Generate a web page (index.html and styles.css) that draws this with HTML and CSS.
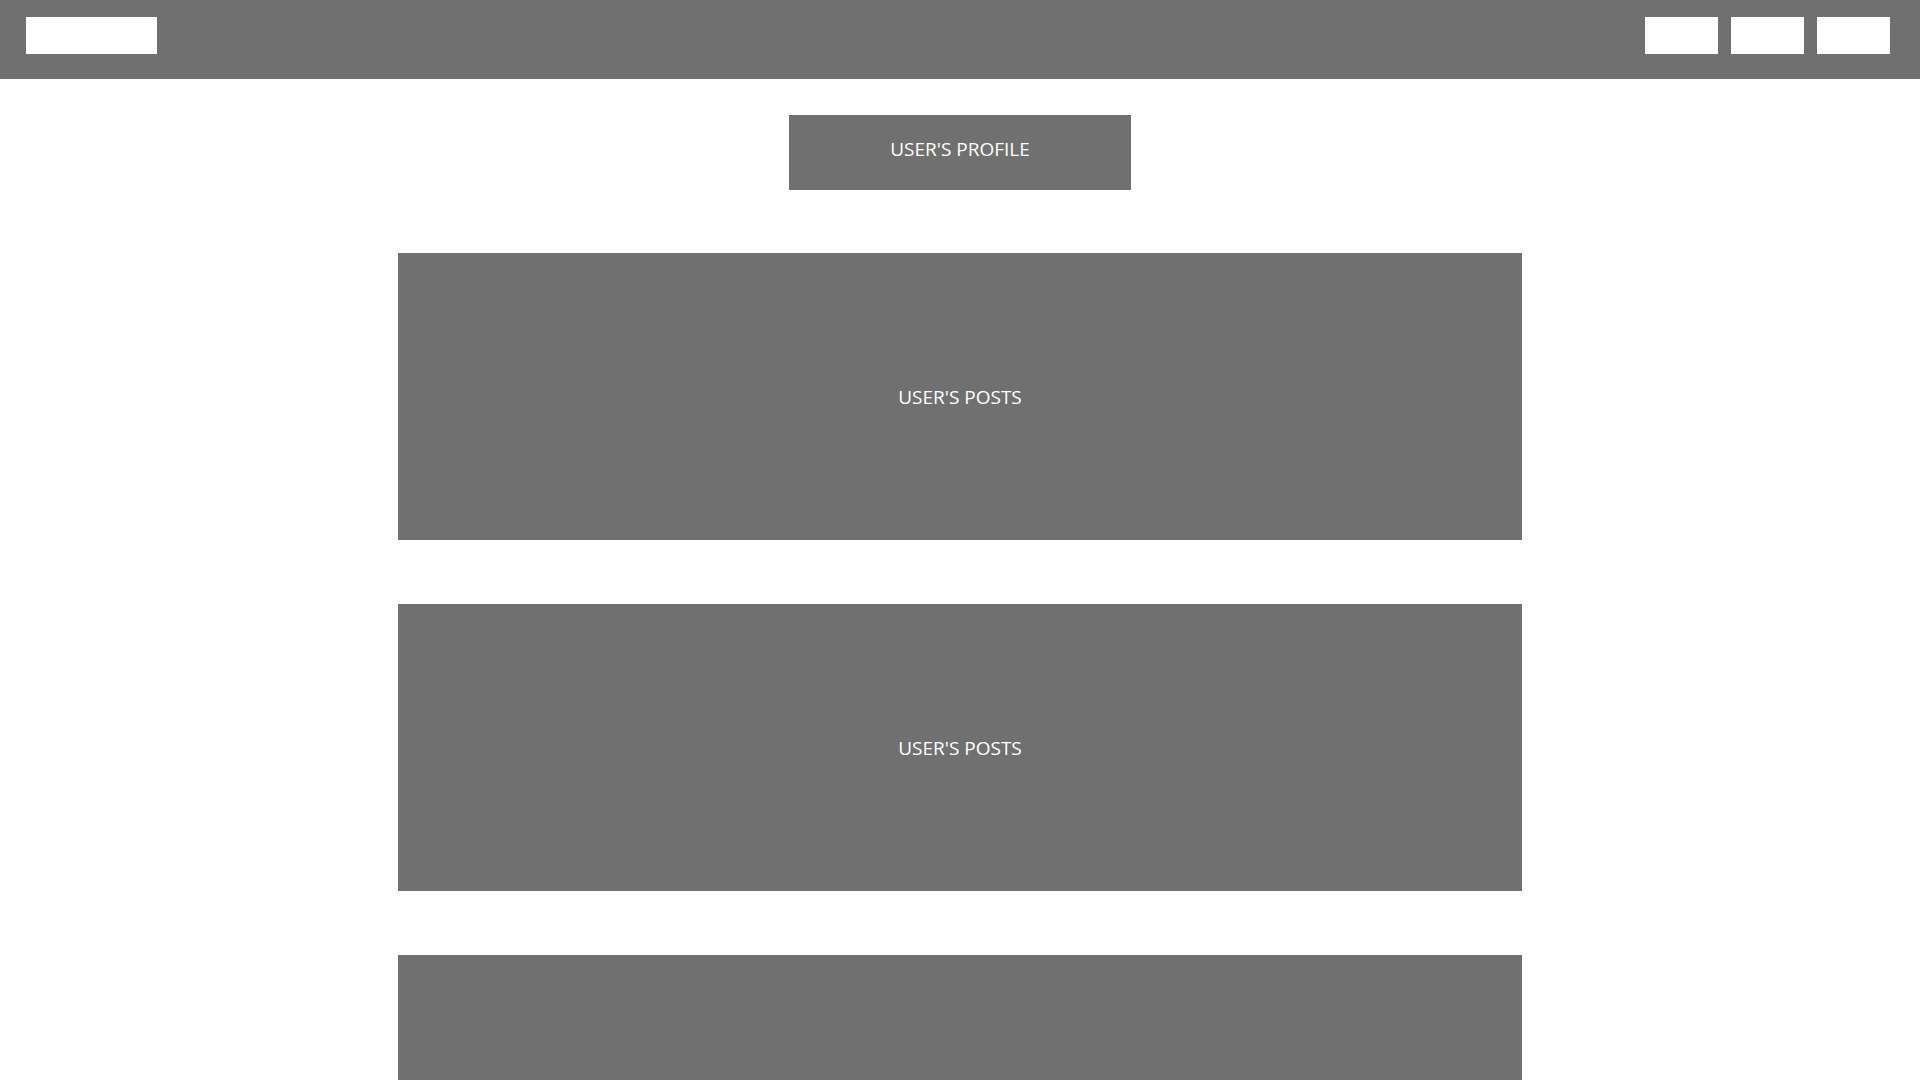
FILE: index.html
```html
<!DOCTYPE html>
<html lang="en">
<head>
<meta charset="utf-8">
<title>User Profile</title>
<link rel="stylesheet" href="styles.css">
</head>
<body>
<header class="topbar">
  <div class="logo"></div>
  <nav class="nav">
    <div class="nav-item"></div>
    <div class="nav-item"></div>
    <div class="nav-item"></div>
  </nav>
</header>
<main class="content">
  <div class="profile">USER'S PROFILE</div>
  <section class="posts">
    <div class="post">USER'S POSTS</div>
    <div class="post">USER'S POSTS</div>
    <div class="post"></div>
  </section>
</main>
</body>
</html>
```
FILE: styles.css
```css
* { box-sizing: border-box; }
html, body { margin: 0; padding: 0; }
body {
  background: #ffffff;
  font-family: "Open Sans", "Noto Sans", sans-serif;
  color: #ffffff;
  overflow: hidden;
  height: 1080px;
}
.topbar {
  height: 79px;
  background: #707070;
  display: flex;
  align-items: flex-start;
  justify-content: space-between;
  padding: 17px 30px 0 26px;
}
.logo {
  width: 131px;
  height: 37px;
  background: #ffffff;
}
.nav {
  display: flex;
  gap: 13px;
}
.nav-item {
  width: 73px;
  height: 37px;
  background: #ffffff;
}
.content {
  display: flex;
  flex-direction: column;
  align-items: center;
  padding-top: 36px;
}
.profile {
  width: 342px;
  height: 75px;
  background: #707070;
  font-size: 19px;
  display: flex;
  justify-content: center;
  padding-top: 22px;
  line-height: 24px;
}
.posts {
  margin-top: 63px;
  display: flex;
  flex-direction: column;
  gap: 64px;
}
.post {
  width: 1124px;
  height: 287px;
  background: #707070;
  display: flex;
  align-items: center;
  justify-content: center;
  font-size: 19px;
}
```
